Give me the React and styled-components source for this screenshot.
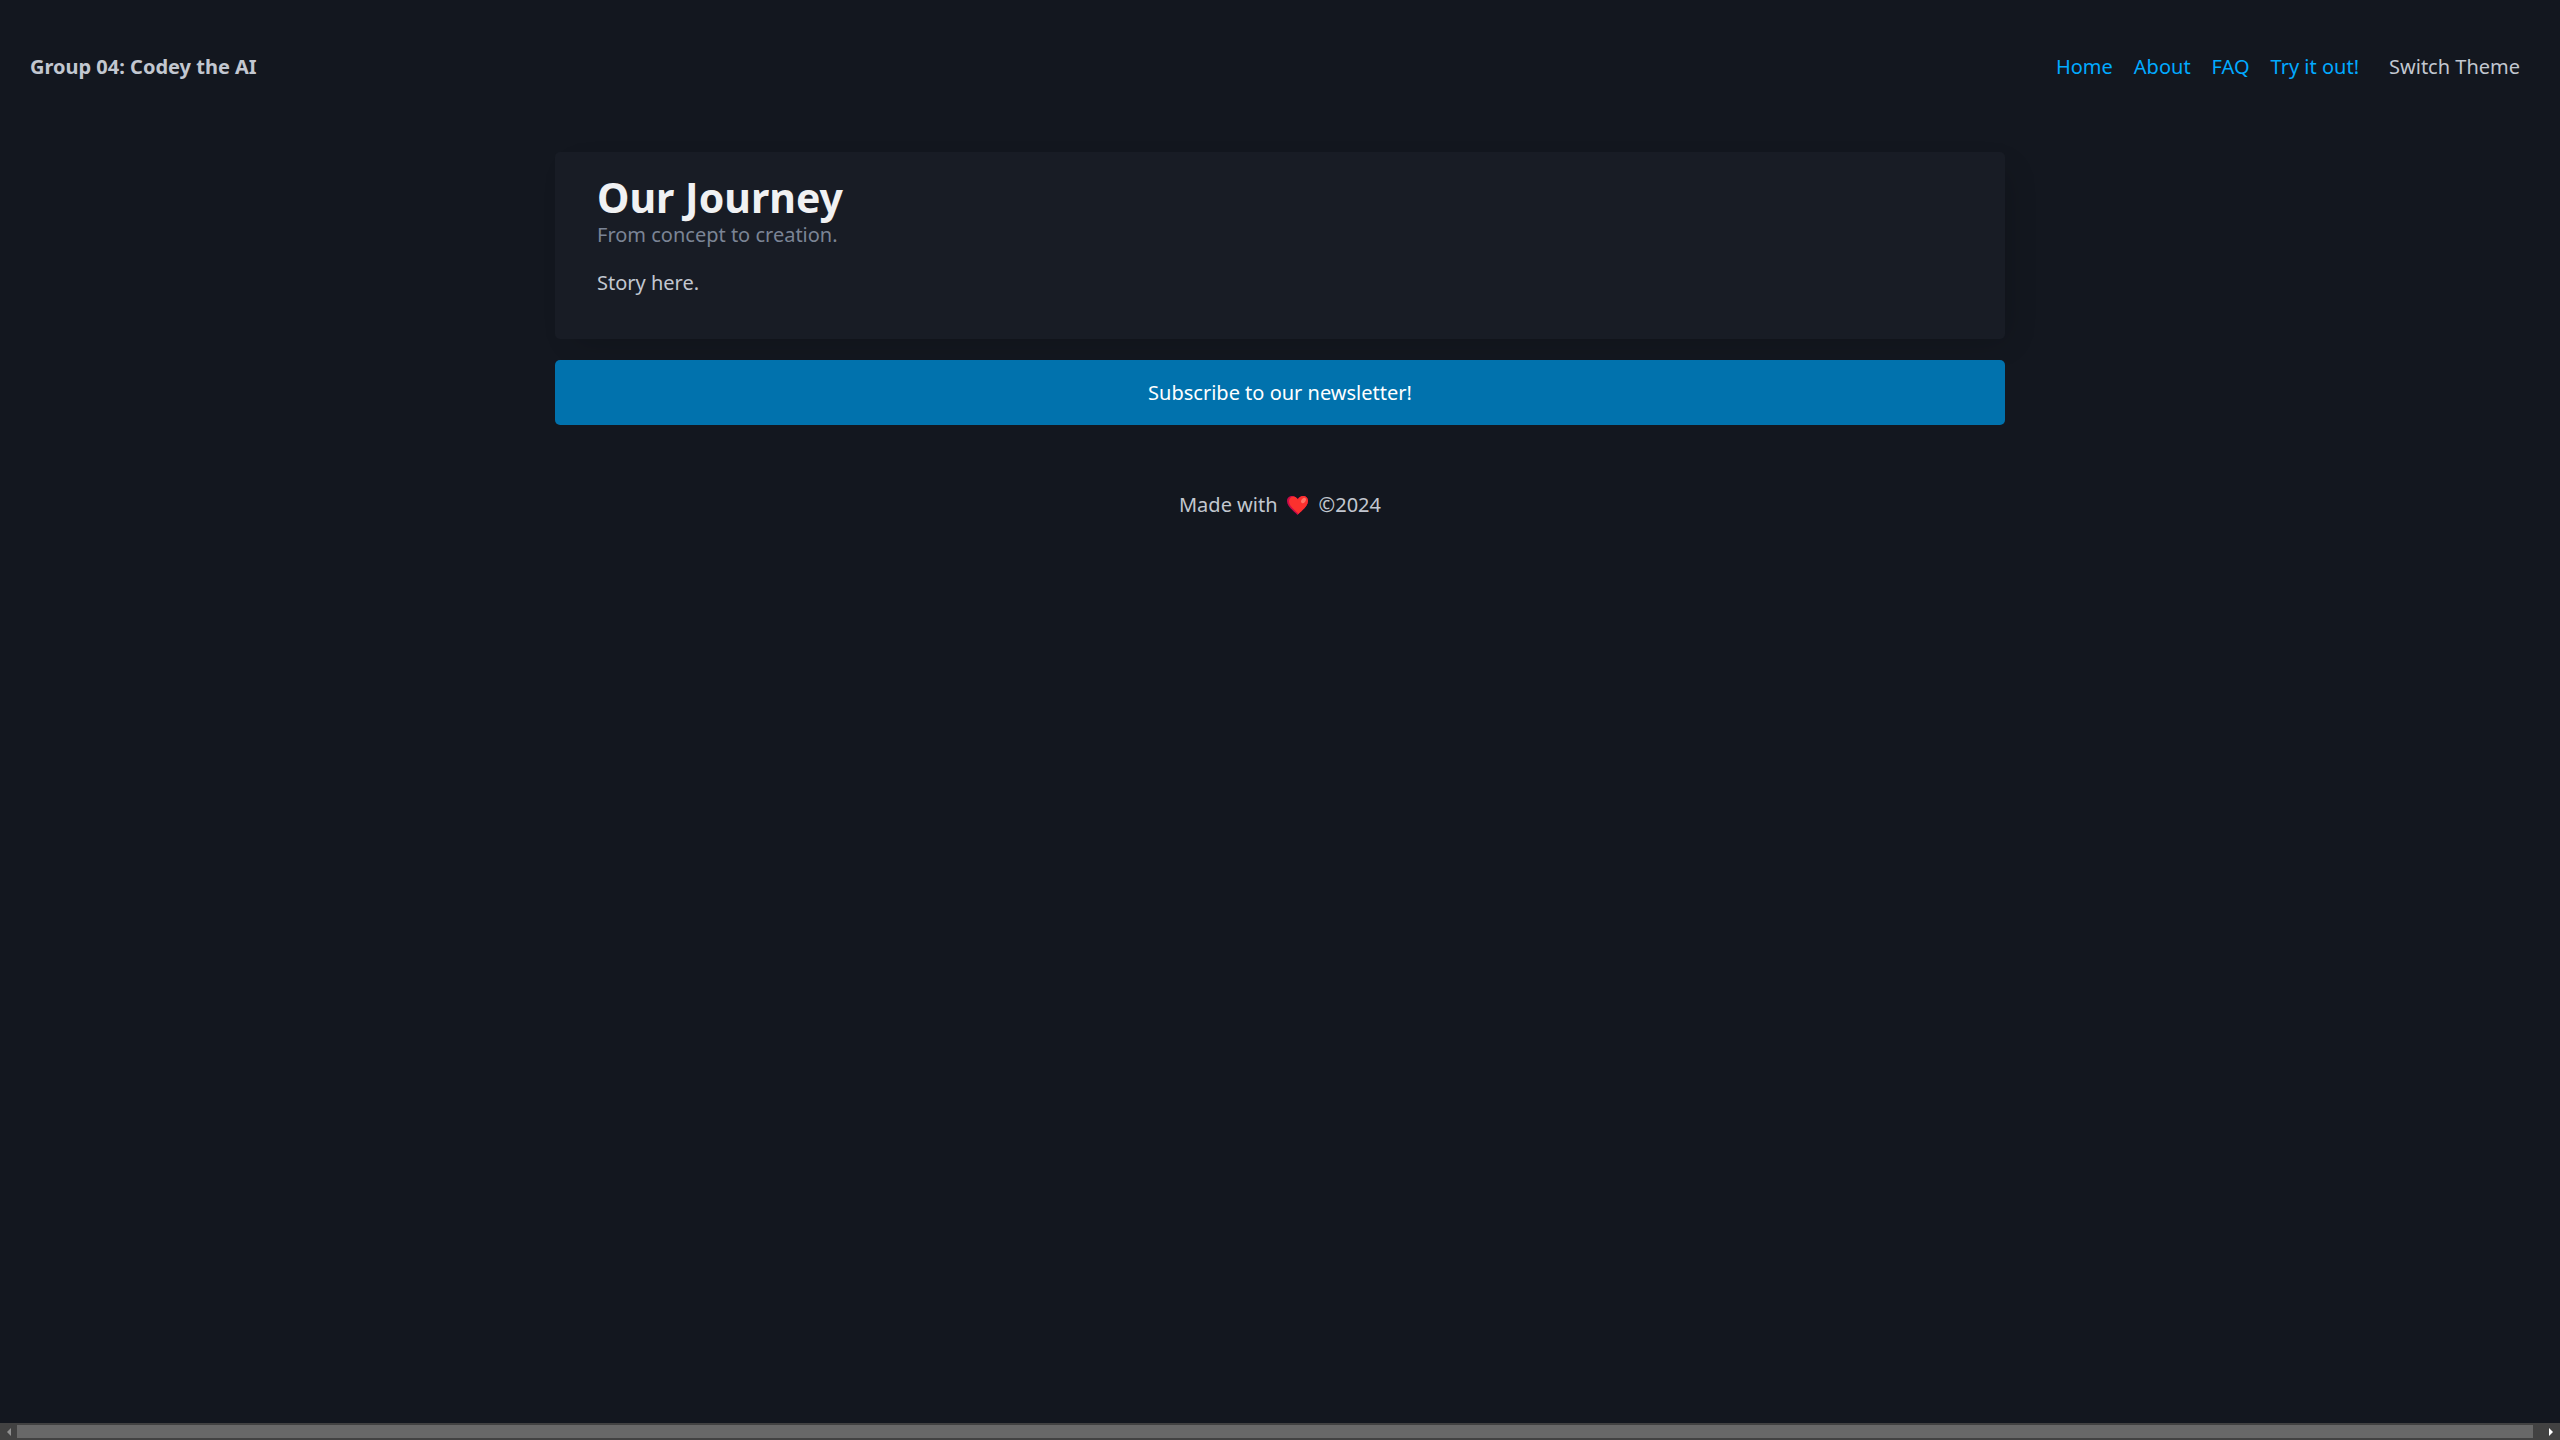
import React from "react";
import styled, { createGlobalStyle } from "styled-components";

const GlobalStyle = createGlobalStyle`
  *, *::before, *::after { box-sizing: border-box; }
  body {
    margin: 0;
    background: #13171f;
    color: #c2c7d0;
    font-family: "Segoe UI", "Noto Sans", "Open Sans", sans-serif;
    font-size: 20px;
    line-height: 32px;
  }
`;

const Page = styled.div`
  display: flex;
  flex-direction: column;
  min-height: 100vh;
`;

const Header = styled.header`
  display: flex;
  align-items: center;
  justify-content: space-between;
  padding: 51px 40px 49px 30px;
`;

const Brand = styled.strong`
  font-weight: 700;
`;

const Nav = styled.nav`
  display: flex;
  align-items: center;
  gap: 30px;
`;

const Links = styled.ul`
  display: flex;
  gap: 21px;
  margin: 0;
  padding: 0;
  list-style: none;
`;

const NavLink = styled.a`
  color: #01aaff;
  text-decoration: none;
`;

const ThemeButton = styled.button`
  padding: 0;
  border: 0;
  background: none;
  color: inherit;
  font: inherit;
  cursor: pointer;
`;

const Main = styled.main`
  display: flex;
  flex-direction: column;
  gap: 21px;
  width: 100%;
  max-width: 1450px;
  margin: 20px auto 0;
`;

const Card = styled.article`
  padding: 23px 42px 40px;
  border-radius: 5px;
  background: #181c25;
  box-shadow: 10px 10px 30px -10px rgba(7, 8, 12, 0.2);
`;

const Title = styled.h1`
  margin: 0;
  color: #f0f1f3;
  font-size: 41px;
  line-height: 44px;
  font-weight: 700;
`;

const Subtitle = styled.p`
  margin: 0 0 16px;
  color: #7b8495;
`;

const Story = styled.p`
  margin: 0;
`;

const SubscribeButton = styled.button`
  width: 100%;
  padding: 17px 21px 16px;
  border: 0;
  border-radius: 5px;
  background: #0172ad;
  color: #fff;
  font: inherit;
  cursor: pointer;
`;

const Footer = styled.footer`
  display: flex;
  align-items: center;
  justify-content: center;
  gap: 9px;
  margin-bottom: auto;
  padding: 64px 0;
`;

const Heart = styled.svg`
  width: 23px;
  height: 22px;
`;

const ScrollTrack = styled.div`
  display: flex;
  align-items: center;
  height: 17px;
  background: #424242;
`;

const ScrollArrow = styled.button`
  display: flex;
  align-items: center;
  justify-content: center;
  width: 17px;
  height: 17px;
  padding: 0;
  border: 0;
  background: none;
  color: ${(p) => (p.$active ? "#ffffff" : "#8f8f8f")};
`;

const ArrowGlyph = styled.svg`
  width: 5px;
  height: 8px;
  fill: currentColor;
`;

const ScrollThumb = styled.div`
  flex: 1;
  height: 13px;
  margin-right: 10px;
  background: #686868;
`;

const links = ["Home", "About", "FAQ", "Try it out!"];

export default function App() {
  return (
    <Page>
      <GlobalStyle />
      <Header>
        <Brand>Group 04: Codey the AI</Brand>
        <Nav>
          <Links>
            {links.map((label) => (
              <li key={label}>
                <NavLink href="#">{label}</NavLink>
              </li>
            ))}
          </Links>
          <ThemeButton type="button">Switch Theme</ThemeButton>
        </Nav>
      </Header>
      <Main>
        <Card>
          <Title>Our Journey</Title>
          <Subtitle>From concept to creation.</Subtitle>
          <Story>Story here.</Story>
        </Card>
        <SubscribeButton type="button">Subscribe to our newsletter!</SubscribeButton>
      </Main>
      <Footer>
        <span>Made with</span>
        <Heart viewBox="1 0 23 22" role="img" aria-label="love">
          <path d="M11.5 21C8 17 1 13 1 7C1 3.500 3.500 2 6 2C8.500 2 10.500 3.500 11.500 5C12.500 3.500 14.500 2 17 2C20 2 22 4 22 7C22 13 15 17 11.500 21Z" fill="#ca0b4a" />
          <path d="M12.500 20C9.500 16.500 3 12.500 3 7.500C3 4.500 5 2.500 7.500 2.500C9.500 2.500 11 4 12 5.500C13 3.500 15 2 17 2C20 2 22 4 22 7C22 12.500 15.500 16.500 12.500 20Z" fill="#fc312e" />
          <ellipse cx="17.500" cy="6.500" rx="2" ry="3" transform="rotate(35 17.500 6.500)" fill="#ff7467" />
        </Heart>
        <span>©2024</span>
      </Footer>
      <ScrollTrack>
        <ScrollArrow type="button" aria-label="Scroll left">
          <ArrowGlyph viewBox="0 0 5 8"><path d="M5 0V8L1 4Z" /></ArrowGlyph>
        </ScrollArrow>
        <ScrollThumb />
        <ScrollArrow type="button" aria-label="Scroll right" $active>
          <ArrowGlyph viewBox="0 0 5 8"><path d="M0 0V8L4 4Z" /></ArrowGlyph>
        </ScrollArrow>
      </ScrollTrack>
    </Page>
  );
}
